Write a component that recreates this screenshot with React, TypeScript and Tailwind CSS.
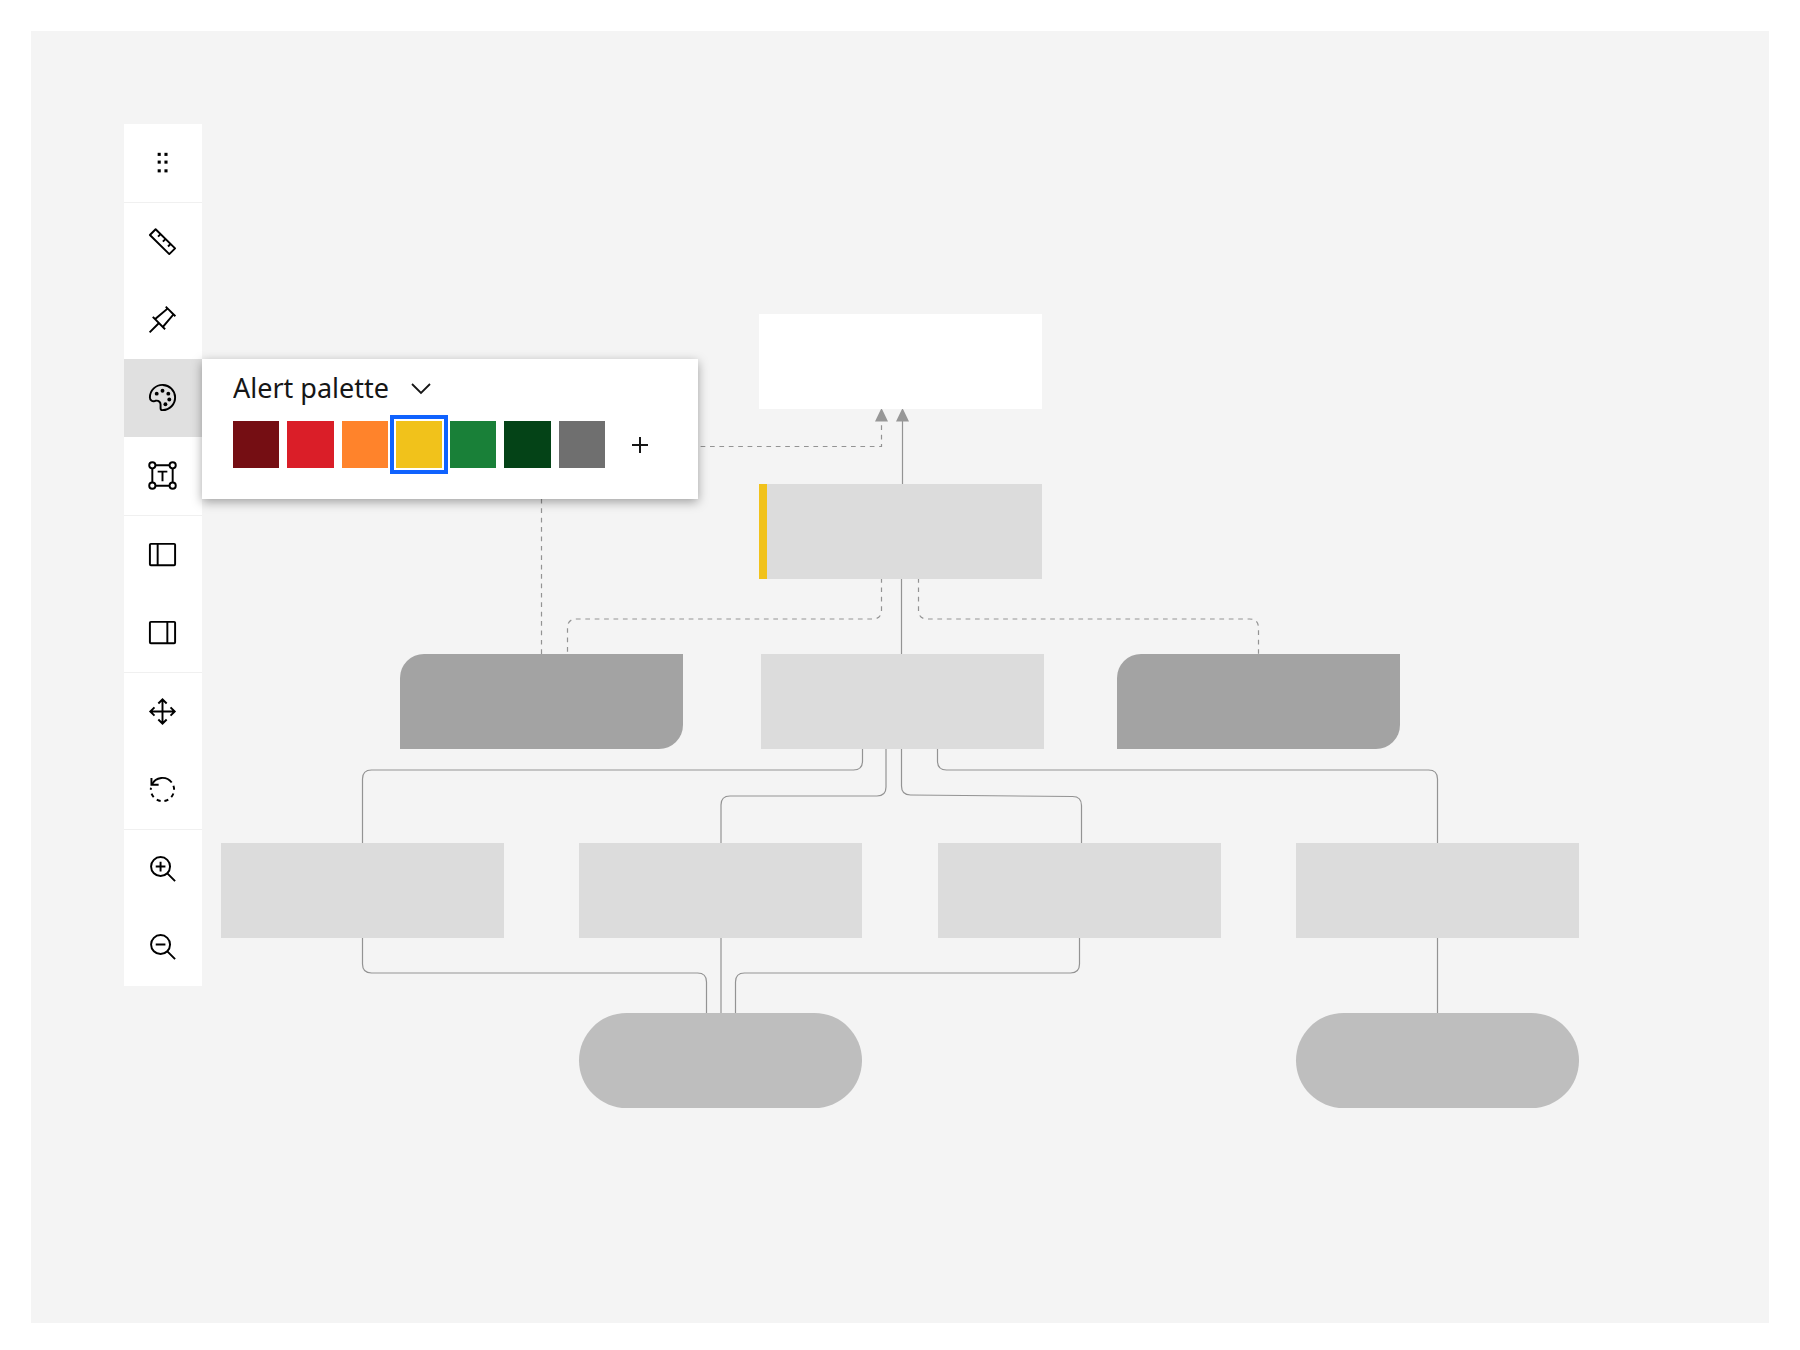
import { Fragment, useState, type ReactNode } from "react";

const icons: Record<string, ReactNode> = {
  drag: (
    <>
      {[6, 14, 23].map((y) => (
        <Fragment key={y}>
          <rect x="11" y={y} width="3.2" height="3.2" />
          <rect x="18" y={y} width="3.2" height="3.2" />
        </Fragment>
      ))}
    </>
  ),
  ruler: (
    <g fill="none" stroke="currentColor" strokeWidth="2" strokeLinejoin="round">
      <path d="M3 9.3 8.9 3.4 29 23.1 23 29Z" />
      <path d="M14 8.4l-2.6 2.6M19 13.5l-2.6 2.6M24.3 18.6l-2.6 2.6" />
    </g>
  ),
  pin: (
    <path d="M28.59 13.31 30 11.9 20 2 18.69 3.41 19.87 4.6 8.38 14.32 6.66 12.61 5.25 14l5.66 5.68L2 28.58 3.41 30l8.91-8.91L18 26.75l1.39-1.42-1.71-1.71L27.4 12.13ZM16.26 22.2 9.8 15.74 21.29 6.02l4.69 4.69Z" />
  ),
  palette: (
    <>
      <circle cx="10" cy="12" r="2" />
      <circle cx="16" cy="9" r="2" />
      <circle cx="22" cy="12" r="2" />
      <circle cx="23" cy="18" r="2" />
      <circle cx="19" cy="23" r="2" />
      <path d="M16.54 2A14 14 0 0 0 2 16a4.82 4.82 0 0 0 6.09 4.65l1.12-.31A3 3 0 0 1 13 23.24V27a3 3 0 0 0 3 3A14 14 0 0 0 30 15.46 14.05 14.05 0 0 0 16.54 2Zm8.11 22.31A11.93 11.93 0 0 1 16 28a1 1 0 0 1-1-1v-3.76a5 5 0 0 0-5-5 5.07 5.07 0 0 0-1.33.18l-1.12.31A2.82 2.82 0 0 1 4 16 12 12 0 0 1 16.47 4 12.18 12.18 0 0 1 28 15.53a11.89 11.89 0 0 1-3.35 8.78Z" />
    </>
  ),
  text: (
    <g fill="none" stroke="currentColor" strokeWidth="2">
      <circle cx="5.500" cy="5.500" r="3.200" />
      <circle cx="26.500" cy="5.500" r="3.200" />
      <circle cx="5.500" cy="26.500" r="3.200" />
      <circle cx="26.500" cy="26.500" r="3.200" />
      <path d="M8.500 5.500h15M8.500 26.500h15M5.500 8.500v15M26.500 8.500v15M11 12h10M16 12v10" />
    </g>
  ),
  panelLeft: (
    <path d="M28 4H4a2 2 0 0 0-2 2v20a2 2 0 0 0 2 2h24a2 2 0 0 0 2-2V6a2 2 0 0 0-2-2ZM10 26H4V6h6Zm18 0H12V6h16Z" />
  ),
  panelRight: (
    <path d="M28 4H4a2 2 0 0 0-2 2v20a2 2 0 0 0 2 2h24a2 2 0 0 0 2-2V6a2 2 0 0 0-2-2ZM4 6h16v20H4Zm24 20h-6V6h6Z" />
  ),
  move: (
    <path d="M30 16 25 11 23.59 12.41 26.17 15 17 15 17 5.83 19.59 8.41 21 7 16 2 11 7 12.41 8.41 15 5.83 15 15 5.83 15 8.41 12.41 7 11 2 16 7 21 8.41 19.59 5.83 17 15 17 15 26.17 12.41 23.59 11 25 16 30 21 25 19.59 23.59 17 26.17 17 17 26.17 17 23.59 19.59 25 21Z" />
  ),
  rotate: (
    <g fill="none" stroke="currentColor" strokeWidth="2">
      <path d="M4.600 4v7H12" />
      <path d="M5 11A12 12 0 0 1 25.500 8.800" />
      <path d="M27.300 12.100A12 12 0 1 1 4.100 14.200" strokeDasharray="4.200 4" />
    </g>
  ),
  zoomIn: (
    <g fill="none" stroke="currentColor" strokeWidth="2">
      <circle cx="14" cy="14" r="9.800" />
      <path d="M21 21l8 8M9 14h10M14 9v10" />
    </g>
  ),
  zoomOut: (
    <g fill="none" stroke="currentColor" strokeWidth="2">
      <circle cx="14" cy="14" r="9.800" />
      <path d="M21 21l8 8M9 14h10" />
    </g>
  ),
};

const groups = [
  [{ icon: "drag", label: "Drag toolbar" }],
  [
    { icon: "ruler", label: "Ruler" },
    { icon: "pin", label: "Pin" },
    { icon: "palette", label: "Color palette" },
    { icon: "text", label: "Text" },
  ],
  [
    { icon: "panelLeft", label: "Left panel" },
    { icon: "panelRight", label: "Right panel" },
  ],
  [
    { icon: "move", label: "Move" },
    { icon: "rotate", label: "Rotate" },
  ],
  [
    { icon: "zoomIn", label: "Zoom in" },
    { icon: "zoomOut", label: "Zoom out" },
  ],
];

const swatches = [
  { name: "Dark red", color: "bg-[#750e13]" },
  { name: "Red", color: "bg-[#da1e28]" },
  { name: "Orange", color: "bg-[#ff832b]" },
  { name: "Yellow", color: "bg-[#f1c21b]" },
  { name: "Green", color: "bg-[#198038]" },
  { name: "Dark green", color: "bg-[#044317]" },
  { name: "Gray", color: "bg-[#6f6f6f]" },
];

const nodes = [
  "left-[759px] top-[314px] bg-white",
  "left-[759px] top-[484px] bg-[#dcdcdc] border-l-8 border-[#f1c21b]",
  "left-[761px] top-[654px] bg-[#dcdcdc]",
  "left-[400px] top-[654px] bg-[#a3a3a3] rounded-tl-3xl rounded-br-3xl",
  "left-[1117px] top-[654px] bg-[#a3a3a3] rounded-tl-3xl rounded-br-3xl",
  "left-[221px] top-[843px] bg-[#dcdcdc]",
  "left-[579px] top-[843px] bg-[#dcdcdc]",
  "left-[938px] top-[843px] bg-[#dcdcdc]",
  "left-[1296px] top-[843px] bg-[#dcdcdc]",
  "left-[579px] top-[1013px] bg-[#bebebe] rounded-full",
  "left-[1296px] top-[1013px] bg-[#bebebe] rounded-full",
];

const solidLinks = [
  "M902.5 484V415",
  "M901.5 578V654",
  "M862.5 748V761Q862.5 770 853.5 770H371.5Q362.5 770 362.5 779V843",
  "M886 748V787Q886 796 877 796H730Q721 796 721 805V843",
  "M901.5 748V786Q901.5 795 910.5 795L1072.5 796.5Q1081.5 796.5 1081.5 805.5V843",
  "M937.5 748V761Q937.5 770 946.5 770H1428.5Q1437.5 770 1437.5 779V843",
  "M362.5 937V964Q362.5 973 371.5 973H697.5Q706.5 973 706.5 982V1013",
  "M721 937V1013",
  "M1079.5 937V964Q1079.5 973 1070.5 973H744.5Q735.5 973 735.5 982V1013",
  "M1437.5 937V1013",
];

const dashedLinks = [
  "M541.5 654V446.5H881.5V415",
  "M881.5 578V610Q881.5 619 872.5 619H576.5Q567.5 619 567.5 628V654",
  "M918.5 578V610Q918.5 619 927.5 619H1249.5Q1258.5 619 1258.5 628V654",
];

function Diagram() {
  return (
    <div className="absolute inset-0 overflow-hidden" aria-hidden="true">
      <svg className="absolute inset-0 h-full w-full" fill="none" stroke="#939393" strokeWidth="1.2">
        {solidLinks.map((d) => (
          <path key={d} d={d} />
        ))}
        {dashedLinks.map((d) => (
          <path key={d} d={d} strokeDasharray="4.7 4.7" />
        ))}
        <path d="M881.5 408l6.5 13.5h-13ZM902.5 408l6.5 13.5h-13Z" fill="#979797" stroke="none" />
      </svg>
      {nodes.map((place) => (
        <div key={place} className={`absolute h-[95px] w-[283px] ${place}`} />
      ))}
    </div>
  );
}

function PalettePopover() {
  const [selected, setSelected] = useState("Yellow");
  return (
    <div className="absolute top-0 left-full z-10 flex w-[496px] flex-col gap-3 bg-white px-[31px] pt-2 pb-[31px] shadow-[0_3px_10px_rgba(0,0,0,0.35)]">
      <div className="flex">
        <div className="relative">
          <select
            aria-label="Palette"
            className="w-[198px] appearance-none bg-transparent font-['Noto_Sans',sans-serif] text-[27px] leading-[42px] text-[#161616]"
          >
            <option>Alert palette</option>
          </select>
          <svg
            viewBox="0 0 20 12"
            className="pointer-events-none absolute top-4 right-0 h-3 w-5"
            fill="none"
            stroke="#161616"
            strokeWidth="1.8"
          >
            <path d="M1 1l9 9 9-9" />
          </svg>
        </div>
      </div>
      <div className="flex items-center">
        <div role="radiogroup" aria-label="Color" className="grid w-[372px] grid-cols-7 gap-2">
          {swatches.map(({ name, color }) => (
            <input
              key={name}
              type="radio"
              name="swatch"
              aria-label={name}
              checked={selected === name}
              onChange={() => setSelected(name)}
              className={`h-[47px] w-full appearance-none checked:z-10 checked:shadow-[0_0_0_2px_white,0_0_0_6px_#0f62fe] ${color}`}
            />
          ))}
        </div>
        <button aria-label="Add color" className="ml-[19px] flex size-8 items-center justify-center">
          <svg viewBox="0 0 16 16" className="size-4" stroke="#161616" strokeWidth="2">
            <path d="M8 0v16M0 8h16" />
          </svg>
        </button>
      </div>
    </div>
  );
}

export default function App() {
  return (
    <div className="relative flex min-h-screen bg-white p-[31px] pb-[27px]">
      <main className="flex flex-1 items-start bg-[#f4f4f4] p-[93px]">
        <Diagram />
        <nav
          aria-label="Canvas tools"
          className="relative flex w-[78px] flex-col divide-y divide-[#f0f0f0] bg-white text-black"
        >
          {groups.map((group) => (
            <div key={group[0].icon} className="flex flex-col">
              {group.map(({ icon, label }) => (
                <div key={icon} className="relative">
                  <button
                    aria-label={label}
                    className={`flex h-[78px] w-full items-center justify-center pr-px pb-px ${
                      icon === "palette" ? "bg-[#e0e0e0]" : "bg-white"
                    }`}
                  >
                    <svg viewBox="0 0 32 32" className="size-[31px]" fill="currentColor">
                      {icons[icon]}
                    </svg>
                  </button>
                  {icon === "palette" && <PalettePopover />}
                </div>
              ))}
            </div>
          ))}
        </nav>
      </main>
    </div>
  );
}
